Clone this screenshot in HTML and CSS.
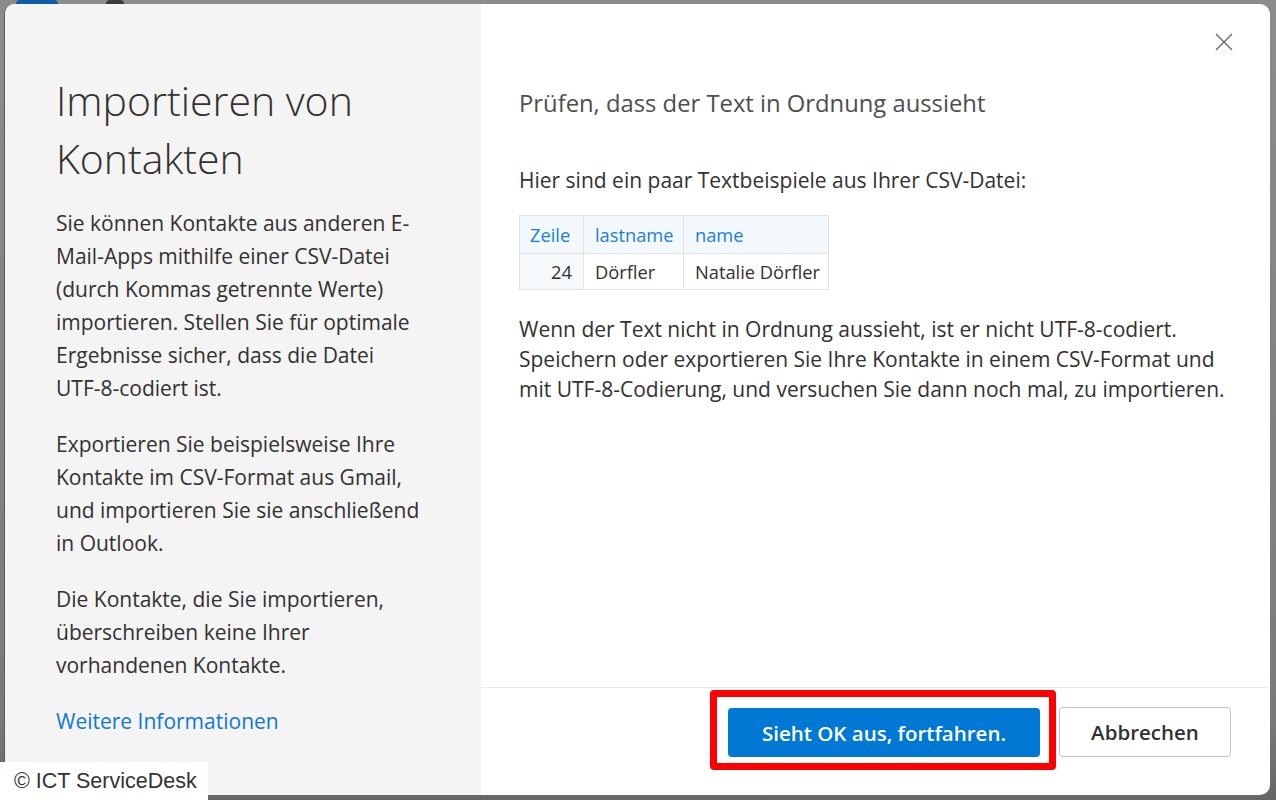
FILE: index.html
```html
<!DOCTYPE html>
<html lang="de">
<head>
<meta charset="utf-8">
<title>Importieren von Kontakten</title>
<link rel="stylesheet" href="styles.css">
</head>
<body>
<div class="backdrop">
  <div class="topbits"><span class="blob blue"></span><span class="blob dark"></span></div>
  <div class="dialog">
    <aside class="side">
      <h1 class="side-title">Importieren von Kontakten</h1>
      <p class="side-text">Sie können Kontakte aus anderen E-Mail-Apps mithilfe einer CSV-Datei (durch Kommas getrennte Werte) importieren. Stellen Sie für optimale Ergebnisse sicher, dass die Datei <span class="nowrap">UTF-8-codiert</span> ist.</p>
      <p class="side-text">Exportieren Sie beispielsweise Ihre Kontakte im CSV-Format aus Gmail, und importieren Sie sie anschließend in Outlook.</p>
      <p class="side-text">Die Kontakte, die Sie importieren, überschreiben keine Ihrer vorhandenen Kontakte.</p>
      <a class="side-link" href="#">Weitere Informationen</a>
    </aside>
    <main class="main">
      <button class="close" aria-label="Schließen">
        <svg width="18" height="18" viewBox="0 0 18 18"><path d="M1 1 L17 17 M17 1 L1 17" stroke="#6b6a69" stroke-width="1.4" fill="none"/></svg>
      </button>
      <div class="content">
        <h2 class="main-title">Prüfen, dass der Text in Ordnung aussieht</h2>
        <p class="main-text intro">Hier sind ein paar Textbeispiele aus Ihrer CSV-Datei:</p>
        <table class="sample">
          <colgroup><col class="c1"><col class="c2"><col class="c3"></colgroup>
          <thead>
            <tr><th class="num">Zeile</th><th>lastname</th><th>name</th></tr>
          </thead>
          <tbody>
            <tr><td class="num">24</td><td>Dörfler</td><td>Natalie Dörfler</td></tr>
          </tbody>
        </table>
        <p class="main-text note">Wenn der Text nicht in Ordnung aussieht, ist er nicht UTF-8-codiert. Speichern oder exportieren Sie Ihre Kontakte in einem CSV-Format und mit UTF-8-Codierung, und versuchen Sie dann noch mal, zu importieren.</p>
      </div>
      <footer class="footer">
        <div class="highlight"><button class="btn primary">Sieht OK aus, fortfahren.</button></div>
        <button class="btn secondary">Abbrechen</button>
      </footer>
    </main>
  </div>
  <div class="watermark">© ICT ServiceDesk</div>
</div>
</body>
</html>
```
FILE: styles.css
```css
* { box-sizing: border-box; }
html, body { margin: 0; padding: 0; }
body {
  width: 1276px;
  height: 800px;
  overflow: hidden;
  background: linear-gradient(#8c8c8c, #7a7a7a 90%, #666);
  font-family: "Open Sans", "Noto Sans", sans-serif;
  color: #323130;
}
.backdrop {
  position: relative;
  width: 1276px;
  height: 800px;
  padding: 4px 6px 5px 4px;
}
.topbits { position: absolute; top: 0; left: 0; width: 200px; height: 4px; }
.blob { position: absolute; top: 0; height: 4px; border-radius: 6px 6px 0 0; }
.blob.blue { left: 16px; width: 42px; background: #0f5aa8; }
.blob.dark { left: 106px; width: 18px; background: #3a3a3a; }
.dialog {
  display: flex;
  height: 791px;
  border-radius: 10px;
  overflow: hidden;
  background: #fff;
  border-left: 1px solid #5a5a5a;
}
.side {
  width: 476px;
  flex: none;
  background: #f4f4f4;
  padding: 67px 59px 0 51px;
}
.side-title {
  margin: 0 0 20px;
  font-weight: 300;
  font-size: 41px;
  line-height: 58px;
  color: #323130;
}
.side-text {
  margin: 0 0 23px;
  font-size: 21px;
  line-height: 33px;
}
.nowrap { white-space: nowrap; }
.side-link {
  display: block;
  margin-top: 22px;
  font-size: 21px;
  line-height: 33px;
  color: #0f78d4;
  text-decoration: none;
}
.main {
  position: relative;
  flex: 1;
  display: flex;
  flex-direction: column;
}
.close {
  position: absolute;
  top: 25px;
  right: 33px;
  width: 26px;
  height: 26px;
  padding: 4px;
  border: 0;
  background: none;
}
.content {
  flex: 1;
  padding: 81px 38px 0 38px;
}
.main-title {
  margin: 0;
  font-weight: 400;
  font-size: 23.8px;
  line-height: 36px;
  color: #4f4e4c;
}
.main-text {
  margin: 0;
  font-size: 21px;
  line-height: 30px;
}
.intro { margin-top: 44px; }
.sample {
  margin-top: 20px;
  border-collapse: collapse;
  table-layout: fixed;
  width: 309px;
  font-size: 18.3px;
}
.sample .c1 { width: 64px; }
.sample .c2 { width: 100px; }
.sample .c3 { width: 145px; }
.sample th, .sample td {
  border: 1px solid #e3e3e3;
  padding: 0 11px;
  text-align: left;
  font-weight: 400;
  white-space: nowrap;
}
.sample th {
  height: 38px;
  color: #1b7fd8;
  background: #f3f8fc;
}
.sample td { height: 36px; color: #323130; }
.sample td.num { background: #f6f9fc; text-align: right; }
.sample th.num { padding: 0 10px; }
.note { margin-top: 24px; }
.footer {
  flex: none;
  height: 108px;
  border-top: 1px solid #ebebeb;
  display: flex;
  justify-content: flex-end;
  align-items: flex-start;
  padding-right: 39px;
}
.highlight {
  margin-top: 2px;
  border: 7px solid #ff0000;
  border-radius: 4px;
  padding: 11px 9px 6px 11px;
  background: #fff;
}
.btn {
  font-family: inherit;
  font-size: 20.5px;
  font-weight: 600;
  border-radius: 4px;
  cursor: pointer;
}
.primary {
  display: block;
  width: 312px;
  height: 49px;
  border: 0;
  background: #0078d4;
  color: #fff;
}
.secondary {
  margin-top: 19px;
  margin-left: 3px;
  width: 172px;
  height: 50px;
  border: 1px solid #c8c6c4;
  background: #fff;
  color: #323130;
}
.watermark {
  position: absolute;
  left: 0;
  bottom: 0;
  width: 208px;
  height: 38px;
  padding-left: 14px;
  background: #fff;
  font-family: "Liberation Sans", Arial, sans-serif;
  font-size: 21.5px;
  line-height: 38px;
  color: #333;
}
```
